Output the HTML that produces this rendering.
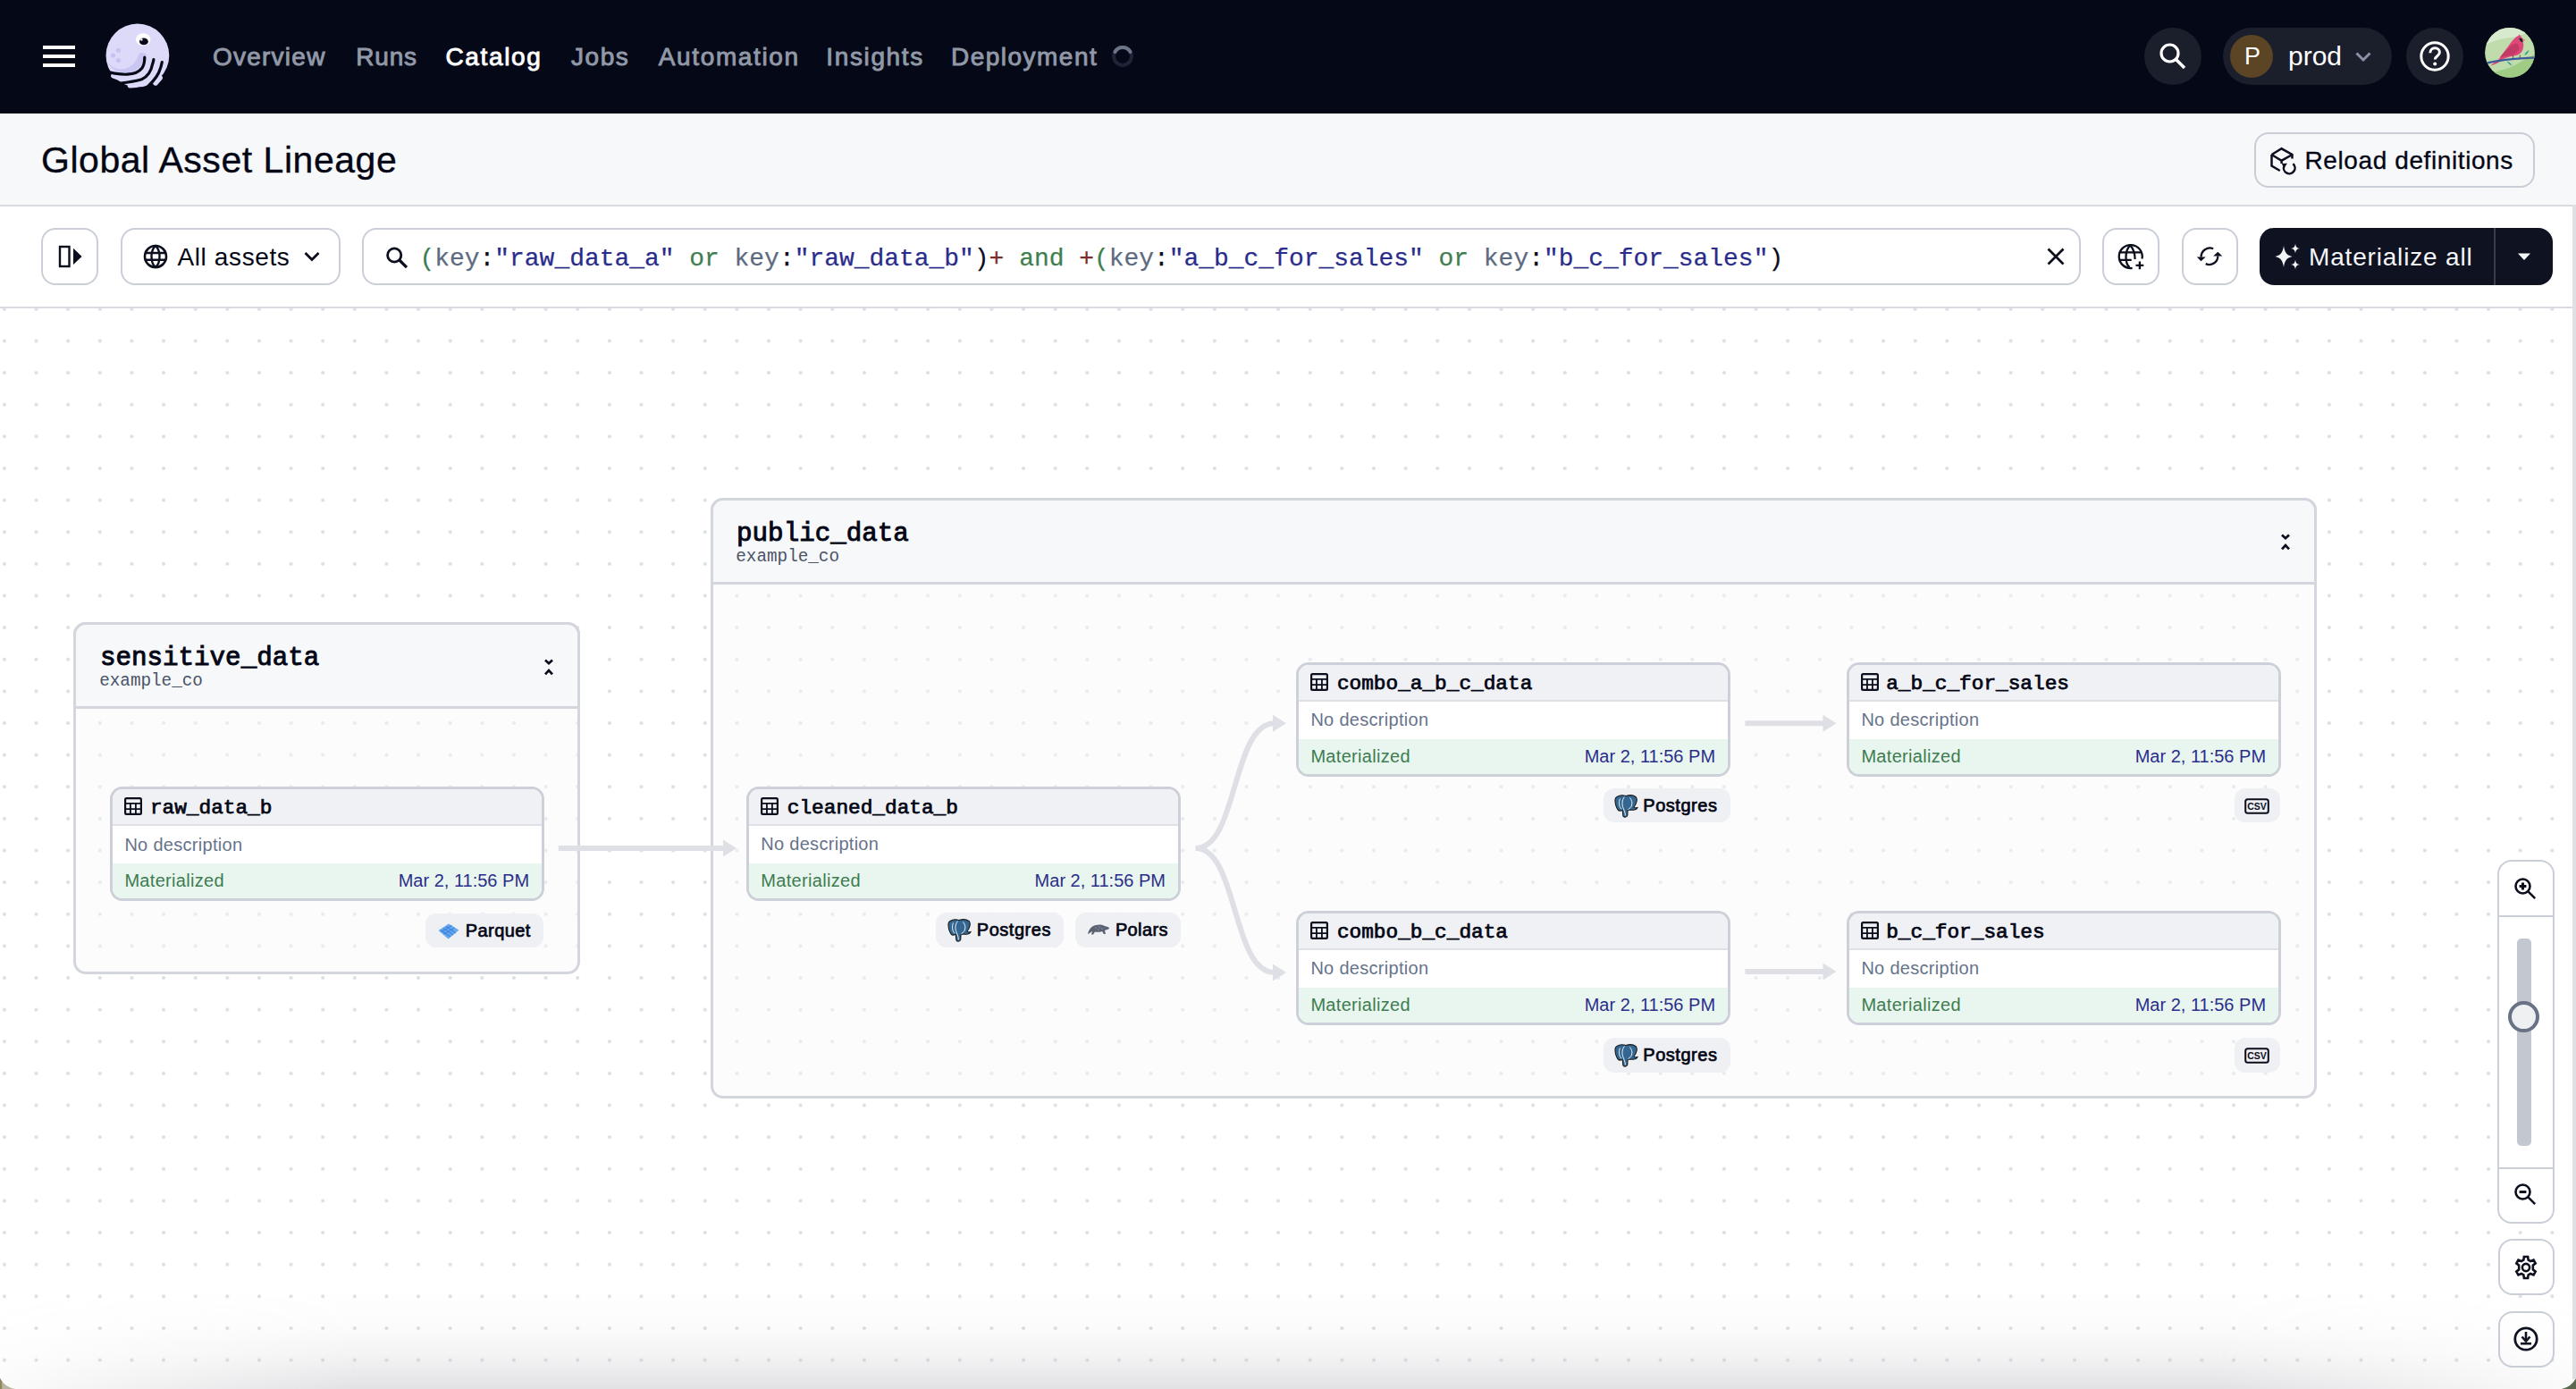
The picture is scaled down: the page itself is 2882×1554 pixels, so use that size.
<!DOCTYPE html>
<html><head><meta charset="utf-8"><title>Global Asset Lineage</title>
<style>
html,body{margin:0;padding:0;}
body{width:2882px;height:1554px;position:relative;overflow:hidden;background:#fff;font-family:'Liberation Sans', sans-serif;}
.a{position:absolute;}
.t{position:absolute;white-space:nowrap;line-height:40px;height:40px;}
</style></head><body>
<div class="a" style="left:0.00px;top:0.00px;width:2882.00px;height:127.00px;background:#050816"></div>
<div class="a" style="left:0.00px;top:127.00px;width:2882.00px;height:1.00px;background:#ffffff"></div>
<div class="a" style="left:48.00px;top:51.00px;width:36.00px;height:4.00px;background:#fff"></div>
<div class="a" style="left:48.00px;top:61.00px;width:36.00px;height:4.00px;background:#fff"></div>
<div class="a" style="left:48.00px;top:71.00px;width:36.00px;height:4.00px;background:#fff"></div>
<svg class="a" style="left:110px;top:20px" width="90" height="90" viewBox="110 20 90 90">
  <defs><clipPath id="hc"><circle cx="153.9" cy="62" r="35.4"/></clipPath></defs>
  <g clip-path="url(#hc)">
  <rect x="110" y="20" width="90" height="90" fill="#dcdaf8"/>
  <path d="M119.5 68 C125 80, 137 83, 146 81 C155 79, 161 71, 164 61.5 C162.5 58.5, 157 58, 155 61 C152.5 69, 147 75.5, 139 77 C131 78.5, 124 75, 119.5 68 Z" fill="#c9c6f4"/>
  </g>
  <path d="M127 84.8 L134 87.2" stroke="#dcdaf8" stroke-width="5.8" stroke-linecap="round"/>
  <path d="M145.5 95.6 L152 95.2" stroke="#dcdaf8" stroke-width="5.8" stroke-linecap="round"/>
  <path d="M174 92.8 L179 87" stroke="#dcdaf8" stroke-width="5.8" stroke-linecap="round"/>
  <path d="M108 77.5 C118 80, 130 83.8, 142.4 83.2 C150 82.8, 156 80, 159 76 C161 73, 161.8 68, 161.8 64.2" stroke="#050816" stroke-width="3.2" fill="none" stroke-linecap="round"/>
  <path d="M120 95 C130 93, 146 92.8, 158.6 88.8 C165 86, 169 80, 170.6 71.8 C171.4 69, 171.8 68, 171.9 66.7" stroke="#050816" stroke-width="3.2" fill="none" stroke-linecap="round"/>
  <path d="M160 102 C166 96.5, 174 89, 177.5 81.5 C179.5 77, 180.8 73, 181.3 69.6" stroke="#050816" stroke-width="3.2" fill="none" stroke-linecap="round"/>
  <circle cx="132.4" cy="56.3" r="2.6" fill="#c6c3f2"/>
  <circle cx="126.5" cy="62.1" r="2.6" fill="#c6c3f2"/>
  <circle cx="132.4" cy="67.6" r="2.6" fill="#c6c3f2"/>
  <ellipse cx="160.2" cy="44.2" rx="8.1" ry="7" fill="#ffffff"/>
  <ellipse cx="160.9" cy="46.4" rx="4.9" ry="3.9" fill="#050816"/>
  <circle cx="158.4" cy="44.4" r="1.2" fill="#ffffff"/>
</svg>
<div class="t" style="left:237.90px;top:43.89px;font-family:'Liberation Sans', sans-serif;font-size:28px;font-weight:normal;color:#9199a8;letter-spacing:1.26px;-webkit-text-stroke:0.9px #9199a8;">Overview</div>
<div class="t" style="left:398.30px;top:43.89px;font-family:'Liberation Sans', sans-serif;font-size:28px;font-weight:normal;color:#9199a8;letter-spacing:0.8px;-webkit-text-stroke:0.9px #9199a8;">Runs</div>
<div class="t" style="left:498.40px;top:43.89px;font-family:'Liberation Sans', sans-serif;font-size:28px;font-weight:normal;color:#ffffff;letter-spacing:1.65px;-webkit-text-stroke:0.9px #ffffff;">Catalog</div>
<div class="t" style="left:639.10px;top:43.89px;font-family:'Liberation Sans', sans-serif;font-size:28px;font-weight:normal;color:#9199a8;letter-spacing:1.53px;-webkit-text-stroke:0.9px #9199a8;">Jobs</div>
<div class="t" style="left:736.80px;top:43.89px;font-family:'Liberation Sans', sans-serif;font-size:28px;font-weight:normal;color:#9199a8;letter-spacing:1.63px;-webkit-text-stroke:0.9px #9199a8;">Automation</div>
<div class="t" style="left:924.30px;top:43.89px;font-family:'Liberation Sans', sans-serif;font-size:28px;font-weight:normal;color:#9199a8;letter-spacing:1.63px;-webkit-text-stroke:0.9px #9199a8;">Insights</div>
<div class="t" style="left:1064.10px;top:43.89px;font-family:'Liberation Sans', sans-serif;font-size:28px;font-weight:normal;color:#9199a8;letter-spacing:1.47px;-webkit-text-stroke:0.9px #9199a8;">Deployment</div>
<svg class="a" style="left:1240px;top:47px" width="32" height="32" viewBox="0 0 32 32">
  <circle cx="16" cy="16" r="9.9" stroke="#1f2335" stroke-width="4" fill="none"/>
  <path d="M7.43 11.05 A9.9 9.9 0 0 1 24.57 11.05" stroke="#6b7588" stroke-width="4" fill="none" stroke-linecap="round"/>
</svg>
<div class="a" style="left:2399.00px;top:31.00px;width:64.00px;height:64.00px;background:#1b1e2b;border-radius:50%"></div>
<svg class="a" style="left:2412px;top:44px" width="38" height="38" viewBox="0 0 38 38">
  <circle cx="15.5" cy="15.5" r="9.5" stroke="#fff" stroke-width="3.2" fill="none"/>
  <path d="M22.5 22.5 L32 32" stroke="#fff" stroke-width="3.6" stroke-linecap="butt"/>
</svg>
<div class="a" style="left:2487.00px;top:31.00px;width:189.00px;height:64.00px;background:#1b1e2b;border-radius:32px"></div>
<div class="a" style="left:2495.00px;top:39.00px;width:48.00px;height:48.00px;background:#5c4524;border-radius:50%"></div>
<div class="t" style="left:2511.00px;top:42.64px;font-family:'Liberation Sans', sans-serif;font-size:27px;font-weight:normal;color:#ffffff;">P</div>
<div class="t" style="left:2560.00px;top:42.70px;font-family:'Liberation Sans', sans-serif;font-size:30px;font-weight:normal;color:#ffffff;">prod</div>
<svg class="a" style="left:2632px;top:52px" width="24" height="22" viewBox="0 0 24 22">
  <path d="M4.5 7.5 L12 15 L19.5 7.5" stroke="#8a93a5" stroke-width="3" fill="none"/>
</svg>
<div class="a" style="left:2692.00px;top:31.00px;width:64.00px;height:64.00px;background:#1b1e2b;border-radius:50%"></div>
<svg class="a" style="left:2704px;top:43px" width="40" height="40" viewBox="0 0 40 40">
  <circle cx="20" cy="20" r="15.2" stroke="#fff" stroke-width="3" fill="none"/>
  <path d="M14.8 16.2 C14.8 12.8 17.2 10.8 20.2 10.8 C23.2 10.8 25.4 12.8 25.4 15.6 C25.4 19.6 20.2 19.8 20.2 23.6" stroke="#fff" stroke-width="3" fill="none"/>
  <circle cx="20.2" cy="28.4" r="2" fill="#fff"/>
</svg>
<svg class="a" style="left:2780px;top:31px" width="56" height="56" viewBox="0 0 56 56">
  <defs><clipPath id="av"><circle cx="28" cy="27.9" r="27.9"/></clipPath></defs>
  <g clip-path="url(#av)">
    <rect width="56" height="56" fill="#c0dcad"/>
    <path d="M0 0 H56 V4 C46 4, 40 10, 30 11 C20 12, 10 14, 0 20Z" fill="#d8eacd"/>
    <path d="M0 56 V52 C10 50, 16 48, 24 46 C34 43, 42 36, 56 30 V56Z" fill="#9fcb85"/>
    <path d="M6 42.6 L16 35 C18 31, 22 27, 28.3 17.7 C32 13, 35 10, 37.5 9 L38.4 7.4 C40 9, 41 10, 42 12.2 L45.1 13.8 L42.5 16 C43.5 18, 43.5 21, 42.8 23 C42 27, 39 30, 35 31 C30 32, 24 33, 19 36 C17 38.5, 12 41, 6 42.6Z" fill="#e0467a"/>
    <path d="M17 33 C22 27, 27 21, 33 18 C37 17, 39 20, 38 24 C37 28, 32 30.5, 25 31.5 C22 32, 19 33, 17 33Z" fill="#c23a66"/>
    <path d="M42 12.2 L45.5 13.8 L42.5 15.6Z" fill="#f29080"/>
    <path d="M38.4 12 C39.5 11.5, 41.5 12, 42.3 13 L42.3 16.4 C40.5 16, 39 14.5, 38.4 12Z" fill="#1b2a2a"/>
    <path d="M0 40 C12 37, 30 34.5, 56 33.4" stroke="#3b5a9c" stroke-width="2.4" fill="none"/>
    <path d="M31.5 30.5 V34 M39.3 30.5 V34" stroke="#6a4050" stroke-width="0.9"/>
    <path d="M44.4 31 C45 28, 47 26, 49.5 25.1 C49 28, 47 30, 44.4 31Z" fill="#3da393"/>
    <path d="M24.6 37.6 C27 38, 29.5 40, 30.6 42.6 C28 42, 26 40, 24.6 37.6Z" fill="#3da393"/>
  </g>
</svg>
<div class="a" style="left:0.00px;top:128.00px;width:2882.00px;height:101.00px;background:#f7f8fa"></div>
<div class="a" style="left:0.00px;top:229.00px;width:2882.00px;height:2.00px;background:#d8dbe1"></div>
<div class="t" style="left:46.00px;top:158.69px;font-family:'Liberation Sans', sans-serif;font-size:41px;font-weight:normal;color:#030615;letter-spacing:0.54px;-webkit-text-stroke:0.35px #030615;">Global Asset Lineage</div>
<div class="a" style="left:2521.50px;top:147.50px;width:314.50px;height:62.50px;border:2px solid #c8cdd6;border-radius:16px;box-sizing:border-box;background:#f7f8fa"></div>
<svg class="a" style="left:2536px;top:162px" width="36" height="36" viewBox="0 0 36 36">
  <path d="M5.5 11 L16.6 4.3 L28.5 11 L28.5 15.5 M5.5 11 L16.6 17.7 L28.5 11 M16.6 17.7 V21 M5.5 11 V23.6 L14.8 29" stroke="#0b0e1c" stroke-width="2.5" fill="none" stroke-linejoin="miter"/>
  <path d="M19.5 23.4 A6.3 6.3 0 1 0 29.4 21.2" stroke="#0b0e1c" stroke-width="2.5" fill="none"/>
  <path d="M16.8 21 L23 20.8 L19.2 26.2Z" fill="#0b0e1c"/>
</svg>
<div class="t" style="left:2578.50px;top:159.59px;font-family:'Liberation Sans', sans-serif;font-size:28px;font-weight:normal;color:#030615;letter-spacing:0.6px;-webkit-text-stroke:0.3px #030615;">Reload definitions</div>
<div class="a" style="left:0.00px;top:231.00px;width:2878.00px;height:112.00px;background:#ffffff"></div>
<div class="a" style="left:0.00px;top:343.00px;width:2878.00px;height:2.00px;background:#d8dbe1"></div>
<div class="a" style="left:46.00px;top:255.00px;width:64.00px;height:63.50px;border:2px solid #c9ced7;border-radius:16px;box-sizing:border-box;background:#fff"></div>
<svg class="a" style="left:60px;top:271px" width="36" height="32" viewBox="0 0 36 32">
  <rect x="7" y="5" width="10.5" height="22" stroke="#0b0e1c" stroke-width="2.4" fill="none"/>
  <path d="M22 6.8 L31.6 16 L22 25Z" fill="#0b0e1c"/>
</svg>
<div class="a" style="left:134.50px;top:255.00px;width:246.00px;height:63.50px;border:2px solid #c9ced7;border-radius:16px;box-sizing:border-box;background:#fff"></div>
<svg class="a" style="left:158px;top:271px" width="32" height="32" viewBox="0 0 32 32">
  <circle cx="16" cy="16" r="12" stroke="#0b0e1c" stroke-width="2.6" fill="none"/>
  <path d="M16 4 C10 9, 10 23, 16 28 C22 23, 22 9, 16 4Z" stroke="#0b0e1c" stroke-width="2.4" fill="none"/>
  <path d="M4.5 12 H27.5 M4.5 19.8 H27.5" stroke="#0b0e1c" stroke-width="2.4"/>
</svg>
<div class="t" style="left:198.50px;top:268.19px;font-family:'Liberation Sans', sans-serif;font-size:28px;font-weight:normal;color:#030615;letter-spacing:0.61px;">All assets</div>
<svg class="a" style="left:336px;top:276px" width="26" height="22" viewBox="0 0 26 22">
  <path d="M5.5 7 L13 14.5 L20.5 7" stroke="#0b0e1c" stroke-width="2.8" fill="none"/>
</svg>
<div class="a" style="left:405.00px;top:255.00px;width:1923.00px;height:63.50px;border:2px solid #c9ced7;border-radius:16px;box-sizing:border-box;background:#fff"></div>
<svg class="a" style="left:428px;top:272px" width="34" height="34" viewBox="0 0 34 34">
  <circle cx="13.2" cy="13.5" r="7.6" stroke="#0b0e1c" stroke-width="2.8" fill="none"/>
  <path d="M18.8 19 L27 27.2" stroke="#0b0e1c" stroke-width="3.2"/>
</svg>
<div class="t" style="left:469.50px;top:269.57px;font-family:'Liberation Mono', monospace;font-size:27.94px;font-weight:normal;color:#0b0e1c;-webkit-text-stroke:0.25px currentColor;"><span style="color:#3f7e51">(</span><span style="color:#5d6a80">key</span><span style="color:#0b0e1c">:</span><span style="color:#2a2c8c">"raw_data_a"</span> <span style="color:#3f7e51">or</span> <span style="color:#5d6a80">key</span><span style="color:#0b0e1c">:</span><span style="color:#2a2c8c">"raw_data_b"</span><span style="color:#0b0e1c">)</span><span style="color:#7b2d2d">+</span> <span style="color:#3f7e51">and</span> <span style="color:#7b2d2d">+</span><span style="color:#3f7e51">(</span><span style="color:#5d6a80">key</span><span style="color:#0b0e1c">:</span><span style="color:#2a2c8c">"a_b_c_for_sales"</span> <span style="color:#3f7e51">or</span> <span style="color:#5d6a80">key</span><span style="color:#0b0e1c">:</span><span style="color:#2a2c8c">"b_c_for_sales"</span><span style="color:#0b0e1c">)</span></div>
<svg class="a" style="left:2283px;top:270px" width="34" height="34" viewBox="0 0 34 34">
  <path d="M8.5 8.5 L25.5 25.5 M25.5 8.5 L8.5 25.5" stroke="#0b0e1c" stroke-width="2.7"/>
</svg>
<div class="a" style="left:2352.00px;top:255.00px;width:63.50px;height:63.50px;border:2px solid #c9ced7;border-radius:16px;box-sizing:border-box;background:#fff"></div>
<svg class="a" style="left:2366px;top:270px" width="38" height="36" viewBox="0 0 38 36">
  <path d="M30.5 19.5 A13 13 0 1 0 19.6 29.9" stroke="#0b0e1c" stroke-width="2.3" fill="none"/>
  <path d="M17.4 4.4 C11 10, 11 24, 16.5 29.2 M17.4 4.4 C21.5 9, 22.6 13, 22.6 20" stroke="#0b0e1c" stroke-width="2.3" fill="none"/>
  <path d="M5 12.3 H30 M5 20.9 H18.7" stroke="#0b0e1c" stroke-width="2.3"/>
  <path d="M27.9 22.5 V31.3 M23.5 26.9 H32.3" stroke="#0b0e1c" stroke-width="2.3"/>
</svg>
<div class="a" style="left:2440.50px;top:255.00px;width:63.50px;height:63.50px;border:2px solid #c9ced7;border-radius:16px;box-sizing:border-box;background:#fff"></div>
<svg class="a" style="left:2454px;top:270px" width="36" height="34" viewBox="0 0 36 34">
  <path d="M22.2 8.3 A9.8 9.8 0 0 0 8.6 17.6" stroke="#0b0e1c" stroke-width="2.3" fill="none"/>
  <path d="M13.7 25.1 A9.6 9.6 0 0 0 27.3 16.4" stroke="#0b0e1c" stroke-width="2.3" fill="none"/>
  <path d="M3.8 17.4 L13.7 17.4 L8.5 22.2Z" fill="#0b0e1c"/>
  <path d="M22.2 16.6 L32.3 16.6 L27.3 11.7Z" fill="#0b0e1c"/>
</svg>
<div class="a" style="left:2528.00px;top:255.00px;width:328.00px;height:63.50px;background:#0f1221;border-radius:16px"></div>
<div class="a" style="left:2790.00px;top:255.00px;width:2.00px;height:63.50px;background:#3a3e4c"></div>
<svg class="a" style="left:2543px;top:270px" width="36" height="34" viewBox="0 0 36 34">
  <path d="M12 5 C13 12 15 15.5 21.5 17 C15 18.5 13 22 12 29 C11 22 9 18.5 2.5 17 C9 15.5 11 12 12 5Z" fill="#f5f6f8"/>
  <path d="M25 2.5 C25.5 6 26.5 7.5 30 8 C26.5 8.5 25.5 10 25 13.5 C24.5 10 23.5 8.5 20 8 C23.5 7.5 24.5 6 25 2.5Z" fill="#f5f6f8"/>
  <path d="M25 20.5 C25.5 24 26.5 25.5 30 26 C26.5 26.5 25.5 28 25 31.5 C24.5 28 23.5 26.5 20 26 C23.5 25.5 24.5 24 25 20.5Z" fill="#f5f6f8"/>
</svg>
<div class="t" style="left:2583.00px;top:268.09px;font-family:'Liberation Sans', sans-serif;font-size:28px;font-weight:normal;color:#f5f6f8;letter-spacing:0.82px;">Materialize all</div>
<svg class="a" style="left:2814px;top:280px" width="20" height="14" viewBox="0 0 20 14">
  <path d="M3 3.5 L17 3.5 L10 11Z" fill="#f5f6f8"/>
</svg>
<svg class="a" style="left:0;top:345px" width="2882" height="1209" viewBox="0 345 2882 1209">
  <defs><pattern id="dots" x="4.9" y="345.8" width="35.63" height="35.63" patternUnits="userSpaceOnUse">
    <circle cx="0" cy="0" r="2.1" fill="#dcdee3"/><circle cx="35.63" cy="0" r="2.1" fill="#dcdee3"/>
    <circle cx="0" cy="35.63" r="2.1" fill="#dcdee3"/><circle cx="35.63" cy="35.63" r="2.1" fill="#dcdee3"/>
  </pattern></defs>
  <rect x="0" y="345" width="2882" height="1209" fill="#ffffff"/>
  <rect x="0" y="345" width="2882" height="1209" fill="url(#dots)"/>
</svg>
<div class="a" style="left:82.00px;top:696.20px;width:567.00px;height:393.80px;border:3px solid #d3d6dd;border-radius:14px;box-sizing:border-box;background:rgba(248,249,250,0.45)"></div>
<div class="a" style="left:82.00px;top:696.20px;width:567.00px;height:97.00px;border:3px solid #d3d6dd;border-bottom-width:3px;border-radius:14px 14px 0 0;box-sizing:border-box;background:#f7f8fa"></div>
<div class="t" style="left:112.00px;top:717.03px;font-family:'Liberation Mono', monospace;font-size:29.2px;font-weight:normal;color:#030615;-webkit-text-stroke:0.95px #030615;">sensitive_data</div>
<div class="t" style="left:111.20px;top:741.86px;font-family:'Liberation Mono', monospace;font-size:19.3px;font-weight:normal;color:#4b5468;">example_co</div>
<svg class="a" style="left:601.80px;top:735.20px" width="24" height="24" viewBox="0 0 24 24">
  <path d="M8 3.4 L12 7.2 L16 3.4 M8 19.3 L12 15 L16 19.3" stroke="#0b0e1c" stroke-width="2.7" fill="none"/>
</svg>
<div class="a" style="left:795.00px;top:557.00px;width:1797.00px;height:672.00px;border:3px solid #d3d6dd;border-radius:14px;box-sizing:border-box;background:rgba(248,249,250,0.45)"></div>
<div class="a" style="left:795.00px;top:557.00px;width:1797.00px;height:97.20px;border:3px solid #d3d6dd;border-bottom-width:3px;border-radius:14px 14px 0 0;box-sizing:border-box;background:#f7f8fa"></div>
<div class="t" style="left:824.10px;top:578.23px;font-family:'Liberation Mono', monospace;font-size:29.2px;font-weight:normal;color:#030615;-webkit-text-stroke:0.95px #030615;">public_data</div>
<div class="t" style="left:823.30px;top:602.56px;font-family:'Liberation Mono', monospace;font-size:19.3px;font-weight:normal;color:#4b5468;">example_co</div>
<svg class="a" style="left:2544.80px;top:595.00px" width="24" height="24" viewBox="0 0 24 24">
  <path d="M8 3.4 L12 7.2 L16 3.4 M8 19.3 L12 15 L16 19.3" stroke="#0b0e1c" stroke-width="2.7" fill="none"/>
</svg>
<svg class="a" style="left:0;top:0" width="2882" height="1554" viewBox="0 0 2882 1554">
  <g fill="none" stroke="#dfe0e5" stroke-width="6">
    <path d="M624.8 949 L810 949"/>
    <path d="M1337.6 949 C1385 949 1378 809.3 1426 809.3"/>
    <path d="M1337.6 949 C1385 949 1378 1088 1426 1088"/>
    <path d="M1952.4 809.2 L2041 809.2"/>
    <path d="M1952.4 1087.1 L2041 1087.1"/>
  </g>
  <g fill="#dfe0e5">
    <path d="M809 939.5 L824 949 L809 958.5Z"/>
    <path d="M1424 799.8 L1439 809.3 L1424 818.8Z"/>
    <path d="M1424 1078.5 L1439 1088 L1424 1097.5Z"/>
    <path d="M2039.5 799.7 L2054.5 809.2 L2039.5 818.7Z"/>
    <path d="M2039.5 1077.6 L2054.5 1087.1 L2039.5 1096.6Z"/>
  </g>
</svg>
<div class="a" style="left:123.20px;top:880.40px;width:485.60px;height:127.60px;border:3px solid #cdd0d8;border-radius:14px;box-sizing:border-box;background:#fff;overflow:hidden"></div>
<div class="a" style="left:126.20px;top:883.40px;width:479.60px;height:38.70px;background:#f0f1f4;border-radius:11px 11px 0 0"></div>
<div class="a" style="left:126.20px;top:922.10px;width:479.60px;height:2.00px;background:#dfe1e6"></div>
<div class="a" style="left:126.20px;top:965.90px;width:479.60px;height:39.10px;background:#e9f6ef;border-radius:0 0 11px 11px"></div>
<svg class="a" style="left:139.1px;top:892.1999999999999px" width="21" height="21" viewBox="0 0 21 21">
  <rect x="1.1" y="1.1" width="17.8" height="17.8" rx="1.4" fill="none" stroke="#0b0e1c" stroke-width="2.2"/>
  <path d="M1 6.95 H19 M1 13.15 H19 M6.95 6.5 V19 M12.9 6.5 V19" stroke="#0b0e1c" stroke-width="1.8"/>
</svg>
<div class="t" style="left:167.90px;top:884.25px;font-family:'Liberation Mono', monospace;font-size:22.75px;font-weight:normal;color:#030615;-webkit-text-stroke:0.75px #030615;">raw_data_b</div>
<div class="t" style="left:139.40px;top:924.57px;font-family:'Liberation Sans', sans-serif;font-size:20px;font-weight:normal;color:#66738a;letter-spacing:0.29px;">No description</div>
<div class="t" style="left:139.40px;top:965.37px;font-family:'Liberation Sans', sans-serif;font-size:20px;font-weight:normal;color:#3d7c50;letter-spacing:0.31px;">Materialized</div>
<div class="t" style="left:445.70px;top:965.37px;font-family:'Liberation Sans', sans-serif;font-size:20px;font-weight:normal;color:#2b2e8a;">Mar 2, 11:56 PM</div>
<div class="a" style="left:835.10px;top:880.00px;width:485.60px;height:127.60px;border:3px solid #cdd0d8;border-radius:14px;box-sizing:border-box;background:#fff;overflow:hidden"></div>
<div class="a" style="left:838.10px;top:883.00px;width:479.60px;height:38.70px;background:#f0f1f4;border-radius:11px 11px 0 0"></div>
<div class="a" style="left:838.10px;top:921.70px;width:479.60px;height:2.00px;background:#dfe1e6"></div>
<div class="a" style="left:838.10px;top:965.50px;width:479.60px;height:39.10px;background:#e9f6ef;border-radius:0 0 11px 11px"></div>
<svg class="a" style="left:851.0px;top:891.8px" width="21" height="21" viewBox="0 0 21 21">
  <rect x="1.1" y="1.1" width="17.8" height="17.8" rx="1.4" fill="none" stroke="#0b0e1c" stroke-width="2.2"/>
  <path d="M1 6.95 H19 M1 13.15 H19 M6.95 6.5 V19 M12.9 6.5 V19" stroke="#0b0e1c" stroke-width="1.8"/>
</svg>
<div class="t" style="left:880.80px;top:883.85px;font-family:'Liberation Mono', monospace;font-size:22.75px;font-weight:normal;color:#030615;-webkit-text-stroke:0.75px #030615;">cleaned_data_b</div>
<div class="t" style="left:851.30px;top:924.17px;font-family:'Liberation Sans', sans-serif;font-size:20px;font-weight:normal;color:#66738a;letter-spacing:0.29px;">No description</div>
<div class="t" style="left:851.30px;top:964.97px;font-family:'Liberation Sans', sans-serif;font-size:20px;font-weight:normal;color:#3d7c50;letter-spacing:0.31px;">Materialized</div>
<div class="t" style="left:1157.60px;top:964.97px;font-family:'Liberation Sans', sans-serif;font-size:20px;font-weight:normal;color:#2b2e8a;">Mar 2, 11:56 PM</div>
<div class="a" style="left:1450.20px;top:741.30px;width:485.60px;height:127.60px;border:3px solid #cdd0d8;border-radius:14px;box-sizing:border-box;background:#fff;overflow:hidden"></div>
<div class="a" style="left:1453.20px;top:744.30px;width:479.60px;height:38.70px;background:#f0f1f4;border-radius:11px 11px 0 0"></div>
<div class="a" style="left:1453.20px;top:783.00px;width:479.60px;height:2.00px;background:#dfe1e6"></div>
<div class="a" style="left:1453.20px;top:826.80px;width:479.60px;height:39.10px;background:#e9f6ef;border-radius:0 0 11px 11px"></div>
<svg class="a" style="left:1466.1000000000001px;top:753.0999999999999px" width="21" height="21" viewBox="0 0 21 21">
  <rect x="1.1" y="1.1" width="17.8" height="17.8" rx="1.4" fill="none" stroke="#0b0e1c" stroke-width="2.2"/>
  <path d="M1 6.95 H19 M1 13.15 H19 M6.95 6.5 V19 M12.9 6.5 V19" stroke="#0b0e1c" stroke-width="1.8"/>
</svg>
<div class="t" style="left:1495.90px;top:745.15px;font-family:'Liberation Mono', monospace;font-size:22.75px;font-weight:normal;color:#030615;-webkit-text-stroke:0.75px #030615;">combo_a_b_c_data</div>
<div class="t" style="left:1466.40px;top:785.47px;font-family:'Liberation Sans', sans-serif;font-size:20px;font-weight:normal;color:#66738a;letter-spacing:0.29px;">No description</div>
<div class="t" style="left:1466.40px;top:826.27px;font-family:'Liberation Sans', sans-serif;font-size:20px;font-weight:normal;color:#3d7c50;letter-spacing:0.31px;">Materialized</div>
<div class="t" style="left:1772.70px;top:826.27px;font-family:'Liberation Sans', sans-serif;font-size:20px;font-weight:normal;color:#2b2e8a;">Mar 2, 11:56 PM</div>
<div class="a" style="left:2066.20px;top:741.30px;width:485.60px;height:127.60px;border:3px solid #cdd0d8;border-radius:14px;box-sizing:border-box;background:#fff;overflow:hidden"></div>
<div class="a" style="left:2069.20px;top:744.30px;width:479.60px;height:38.70px;background:#f0f1f4;border-radius:11px 11px 0 0"></div>
<div class="a" style="left:2069.20px;top:783.00px;width:479.60px;height:2.00px;background:#dfe1e6"></div>
<div class="a" style="left:2069.20px;top:826.80px;width:479.60px;height:39.10px;background:#e9f6ef;border-radius:0 0 11px 11px"></div>
<svg class="a" style="left:2082.1px;top:753.0999999999999px" width="21" height="21" viewBox="0 0 21 21">
  <rect x="1.1" y="1.1" width="17.8" height="17.8" rx="1.4" fill="none" stroke="#0b0e1c" stroke-width="2.2"/>
  <path d="M1 6.95 H19 M1 13.15 H19 M6.95 6.5 V19 M12.9 6.5 V19" stroke="#0b0e1c" stroke-width="1.8"/>
</svg>
<div class="t" style="left:2110.20px;top:745.15px;font-family:'Liberation Mono', monospace;font-size:22.75px;font-weight:normal;color:#030615;-webkit-text-stroke:0.75px #030615;">a_b_c_for_sales</div>
<div class="t" style="left:2082.40px;top:785.47px;font-family:'Liberation Sans', sans-serif;font-size:20px;font-weight:normal;color:#66738a;letter-spacing:0.29px;">No description</div>
<div class="t" style="left:2082.40px;top:826.27px;font-family:'Liberation Sans', sans-serif;font-size:20px;font-weight:normal;color:#3d7c50;letter-spacing:0.31px;">Materialized</div>
<div class="t" style="left:2388.70px;top:826.27px;font-family:'Liberation Sans', sans-serif;font-size:20px;font-weight:normal;color:#2b2e8a;">Mar 2, 11:56 PM</div>
<div class="a" style="left:1450.20px;top:1019.20px;width:485.60px;height:127.60px;border:3px solid #cdd0d8;border-radius:14px;box-sizing:border-box;background:#fff;overflow:hidden"></div>
<div class="a" style="left:1453.20px;top:1022.20px;width:479.60px;height:38.70px;background:#f0f1f4;border-radius:11px 11px 0 0"></div>
<div class="a" style="left:1453.20px;top:1060.90px;width:479.60px;height:2.00px;background:#dfe1e6"></div>
<div class="a" style="left:1453.20px;top:1104.70px;width:479.60px;height:39.10px;background:#e9f6ef;border-radius:0 0 11px 11px"></div>
<svg class="a" style="left:1466.1000000000001px;top:1031.0px" width="21" height="21" viewBox="0 0 21 21">
  <rect x="1.1" y="1.1" width="17.8" height="17.8" rx="1.4" fill="none" stroke="#0b0e1c" stroke-width="2.2"/>
  <path d="M1 6.95 H19 M1 13.15 H19 M6.95 6.5 V19 M12.9 6.5 V19" stroke="#0b0e1c" stroke-width="1.8"/>
</svg>
<div class="t" style="left:1495.90px;top:1023.05px;font-family:'Liberation Mono', monospace;font-size:22.75px;font-weight:normal;color:#030615;-webkit-text-stroke:0.75px #030615;">combo_b_c_data</div>
<div class="t" style="left:1466.40px;top:1063.37px;font-family:'Liberation Sans', sans-serif;font-size:20px;font-weight:normal;color:#66738a;letter-spacing:0.29px;">No description</div>
<div class="t" style="left:1466.40px;top:1104.17px;font-family:'Liberation Sans', sans-serif;font-size:20px;font-weight:normal;color:#3d7c50;letter-spacing:0.31px;">Materialized</div>
<div class="t" style="left:1772.70px;top:1104.17px;font-family:'Liberation Sans', sans-serif;font-size:20px;font-weight:normal;color:#2b2e8a;">Mar 2, 11:56 PM</div>
<div class="a" style="left:2066.20px;top:1019.20px;width:485.60px;height:127.60px;border:3px solid #cdd0d8;border-radius:14px;box-sizing:border-box;background:#fff;overflow:hidden"></div>
<div class="a" style="left:2069.20px;top:1022.20px;width:479.60px;height:38.70px;background:#f0f1f4;border-radius:11px 11px 0 0"></div>
<div class="a" style="left:2069.20px;top:1060.90px;width:479.60px;height:2.00px;background:#dfe1e6"></div>
<div class="a" style="left:2069.20px;top:1104.70px;width:479.60px;height:39.10px;background:#e9f6ef;border-radius:0 0 11px 11px"></div>
<svg class="a" style="left:2082.1px;top:1031.0px" width="21" height="21" viewBox="0 0 21 21">
  <rect x="1.1" y="1.1" width="17.8" height="17.8" rx="1.4" fill="none" stroke="#0b0e1c" stroke-width="2.2"/>
  <path d="M1 6.95 H19 M1 13.15 H19 M6.95 6.5 V19 M12.9 6.5 V19" stroke="#0b0e1c" stroke-width="1.8"/>
</svg>
<div class="t" style="left:2110.20px;top:1023.05px;font-family:'Liberation Mono', monospace;font-size:22.75px;font-weight:normal;color:#030615;-webkit-text-stroke:0.75px #030615;">b_c_for_sales</div>
<div class="t" style="left:2082.40px;top:1063.37px;font-family:'Liberation Sans', sans-serif;font-size:20px;font-weight:normal;color:#66738a;letter-spacing:0.29px;">No description</div>
<div class="t" style="left:2082.40px;top:1104.17px;font-family:'Liberation Sans', sans-serif;font-size:20px;font-weight:normal;color:#3d7c50;letter-spacing:0.31px;">Materialized</div>
<div class="t" style="left:2388.70px;top:1104.17px;font-family:'Liberation Sans', sans-serif;font-size:20px;font-weight:normal;color:#2b2e8a;">Mar 2, 11:56 PM</div>
<div class="a" style="left:476.40px;top:1021.60px;width:131.20px;height:38.80px;background:#eff0f3;border-radius:12px"></div>
<svg class="a" style="left:490px;top:1031.5px" width="24" height="20" viewBox="0 0 24 20">
  <path d="M0.5 9 L12 1.5 L23.5 8.5 L11.5 18.5Z" fill="#6aa8ee"/>
  <path d="M3 8.5 L14 16 M6 6.5 L17 14 M9 4.5 L20 12 M3.5 10.5 L15.5 3.5 M6.5 13 L18.5 6" stroke="#3d86e0" stroke-width="1.2"/>
</svg>
<div class="t" style="left:520.80px;top:1020.57px;font-family:'Liberation Sans', sans-serif;font-size:20px;font-weight:normal;color:#030615;letter-spacing:0.42px;-webkit-text-stroke:0.7px #030615;">Parquet</div>
<div class="a" style="left:1047.00px;top:1021.40px;width:142.80px;height:38.80px;background:#eff0f3;border-radius:12px"></div>
<svg class="a" style="left:1059.5px;top:1027.8px" width="28" height="28" viewBox="0 0 28 28">
  <path d="M3 2.5 C6 0.5, 10 0.5, 13 1.5 C16 0.5, 21 0.2, 24 2.5 C26.5 5, 25 10, 22 14 C22.5 15, 24 15, 26 14.5 C25 17, 22 17.5, 18.5 17 C17 17, 15.5 17.2, 15 18 L14.8 23 C14.5 25.5, 10 26, 9.8 23.5 L9.2 17.5 C8 17.8, 6 18.8, 4.5 17.5 C2 15, 0.8 9, 1 5.5 C1.2 4, 2 3, 3 2.5Z" fill="#336791" stroke="#1b1b1b" stroke-width="1.1"/>
  <path d="M6.5 4.5 C5 8, 5 13, 8 16.2 M11.5 2.5 C8.5 6, 8.5 11, 10 15 C11 18, 12.5 20, 12.3 23.5 M17.5 3.5 C19.5 6, 20.5 9, 19.5 12 C19 14, 17.5 15.5, 15.5 16.5" stroke="#ffffff" stroke-width="0.9" fill="none"/>
</svg>
<div class="t" style="left:1092.80px;top:1020.37px;font-family:'Liberation Sans', sans-serif;font-size:20px;font-weight:normal;color:#030615;letter-spacing:0.53px;-webkit-text-stroke:0.7px #030615;">Postgres</div>
<div class="a" style="left:1203.20px;top:1021.40px;width:117.60px;height:38.80px;background:#eff0f3;border-radius:12px"></div>
<svg class="a" style="left:1216px;top:1033px" width="26" height="14" viewBox="0 0 26 14">
  <path d="M1 12 C2 7 5 3 10 2 C14 1 18 1.5 20 3 C22 3.5 25 4 25 6 C23 7 21 7.5 20 8 L21 12 L19 12 L17 9 C14 10 11 10 9 9.5 L7 12.5 L5 12.5 L6 9 C4 10 2.5 11.5 1 12Z" fill="#5b6273"/>
  <circle cx="10" cy="5" r="0.6" fill="#c8ccd6"/><circle cx="14" cy="4" r="0.6" fill="#c8ccd6"/><circle cx="13" cy="7" r="0.6" fill="#c8ccd6"/><circle cx="17" cy="6" r="0.6" fill="#c8ccd6"/>
</svg>
<div class="t" style="left:1247.90px;top:1020.37px;font-family:'Liberation Sans', sans-serif;font-size:20px;font-weight:normal;color:#030615;letter-spacing:0.38px;-webkit-text-stroke:0.7px #030615;">Polars</div>
<div class="a" style="left:1793.80px;top:881.70px;width:142.00px;height:38.80px;background:#eff0f3;border-radius:12px"></div>
<svg class="a" style="left:1805.6px;top:888.6px" width="28" height="28" viewBox="0 0 28 28">
  <path d="M3 2.5 C6 0.5, 10 0.5, 13 1.5 C16 0.5, 21 0.2, 24 2.5 C26.5 5, 25 10, 22 14 C22.5 15, 24 15, 26 14.5 C25 17, 22 17.5, 18.5 17 C17 17, 15.5 17.2, 15 18 L14.8 23 C14.5 25.5, 10 26, 9.8 23.5 L9.2 17.5 C8 17.8, 6 18.8, 4.5 17.5 C2 15, 0.8 9, 1 5.5 C1.2 4, 2 3, 3 2.5Z" fill="#336791" stroke="#1b1b1b" stroke-width="1.1"/>
  <path d="M6.5 4.5 C5 8, 5 13, 8 16.2 M11.5 2.5 C8.5 6, 8.5 11, 10 15 C11 18, 12.5 20, 12.3 23.5 M17.5 3.5 C19.5 6, 20.5 9, 19.5 12 C19 14, 17.5 15.5, 15.5 16.5" stroke="#ffffff" stroke-width="0.9" fill="none"/>
</svg>
<div class="t" style="left:1838.30px;top:880.67px;font-family:'Liberation Sans', sans-serif;font-size:20px;font-weight:normal;color:#030615;letter-spacing:0.53px;-webkit-text-stroke:0.7px #030615;">Postgres</div>
<div class="a" style="left:1793.80px;top:1160.90px;width:142.00px;height:38.80px;background:#eff0f3;border-radius:12px"></div>
<svg class="a" style="left:1805.6px;top:1167.8px" width="28" height="28" viewBox="0 0 28 28">
  <path d="M3 2.5 C6 0.5, 10 0.5, 13 1.5 C16 0.5, 21 0.2, 24 2.5 C26.5 5, 25 10, 22 14 C22.5 15, 24 15, 26 14.5 C25 17, 22 17.5, 18.5 17 C17 17, 15.5 17.2, 15 18 L14.8 23 C14.5 25.5, 10 26, 9.8 23.5 L9.2 17.5 C8 17.8, 6 18.8, 4.5 17.5 C2 15, 0.8 9, 1 5.5 C1.2 4, 2 3, 3 2.5Z" fill="#336791" stroke="#1b1b1b" stroke-width="1.1"/>
  <path d="M6.5 4.5 C5 8, 5 13, 8 16.2 M11.5 2.5 C8.5 6, 8.5 11, 10 15 C11 18, 12.5 20, 12.3 23.5 M17.5 3.5 C19.5 6, 20.5 9, 19.5 12 C19 14, 17.5 15.5, 15.5 16.5" stroke="#ffffff" stroke-width="0.9" fill="none"/>
</svg>
<div class="t" style="left:1838.30px;top:1159.87px;font-family:'Liberation Sans', sans-serif;font-size:20px;font-weight:normal;color:#030615;letter-spacing:0.53px;-webkit-text-stroke:0.7px #030615;">Postgres</div>
<div class="a" style="left:2499.60px;top:881.70px;width:51.00px;height:38.80px;background:#eff0f3;border-radius:12px"></div>
<svg class="a" style="left:2510.8px;top:892.5px" width="28" height="18" viewBox="0 0 28 18">
  <rect x="1.2" y="1.2" width="25.6" height="15.6" rx="2.5" fill="none" stroke="#0b0e1c" stroke-width="2"/>
  <text x="14" y="13.2" text-anchor="middle" font-family="Liberation Sans" font-weight="bold" font-size="10.5" fill="#0b0e1c">CSV</text>
</svg>
<div class="a" style="left:2499.60px;top:1160.90px;width:51.00px;height:38.80px;background:#eff0f3;border-radius:12px"></div>
<svg class="a" style="left:2510.8px;top:1171.7px" width="28" height="18" viewBox="0 0 28 18">
  <rect x="1.2" y="1.2" width="25.6" height="15.6" rx="2.5" fill="none" stroke="#0b0e1c" stroke-width="2"/>
  <text x="14" y="13.2" text-anchor="middle" font-family="Liberation Sans" font-weight="bold" font-size="10.5" fill="#0b0e1c">CSV</text>
</svg>
<div class="a" style="left:2794.00px;top:962.40px;width:63.50px;height:406.20px;border:2px solid #c9ced7;box-sizing:border-box;background:#fff;border-radius:16px"></div>
<div class="a" style="left:2796.00px;top:1024.00px;width:59.50px;height:2.00px;background:#c9ced7"></div>
<div class="a" style="left:2796.00px;top:1306.00px;width:59.50px;height:2.00px;background:#c9ced7"></div>
<div class="a" style="left:2815.70px;top:1049.70px;width:16.40px;height:232.20px;background:#c3c7cf;border-radius:5px"></div>
<svg class="a" style="left:2802px;top:1117px" width="44" height="44" viewBox="0 0 44 44">
  <circle cx="21.5" cy="20.6" r="15.5" fill="#eff0f2" stroke="#6a7286" stroke-width="4"/>
</svg>
<svg class="a" style="left:2811px;top:980px" width="30" height="30" viewBox="0 0 30 30">
  <circle cx="11.5" cy="11.5" r="8" fill="none" stroke="#0b0e1c" stroke-width="2.6"/>
  <path d="M17.2 17.2 L25.2 25.2" stroke="#0b0e1c" stroke-width="2.5"/>
  <path d="M7.6 11.5 H15.4 M11.5 7.6 V15.4" stroke="#0b0e1c" stroke-width="3"/>
</svg>
<svg class="a" style="left:2811px;top:1322px" width="30" height="30" viewBox="0 0 30 30">
  <circle cx="11.5" cy="11.5" r="8" fill="none" stroke="#0b0e1c" stroke-width="2.6"/>
  <path d="M17.2 17.2 L25.2 25.2" stroke="#0b0e1c" stroke-width="2.5"/>
  <path d="M7.6 11.5 H15.4 " stroke="#0b0e1c" stroke-width="3"/>
</svg>
<div class="a" style="left:2794.50px;top:1386.30px;width:63.00px;height:63.00px;border:2px solid #c9ced7;box-sizing:border-box;background:#fff;border-radius:16px"></div>
<svg class="a" style="left:2810px;top:1402px" width="32" height="32" viewBox="0 0 32 32">
  <g transform="translate(16 16) scale(0.89) translate(-16 -16)">
  <path d="M13.6 2.5 H18.4 L19 6.6 L21.8 8.2 L25.6 6.6 L28 10.8 L24.8 13.4 V18.6 L28 21.2 L25.6 25.4 L21.8 23.8 L19 25.4 L18.4 29.5 H13.6 L13 25.4 L10.2 23.8 L6.4 25.4 L4 21.2 L7.2 18.6 V13.4 L4 10.8 L6.4 6.6 L10.2 8.2 L13 6.6Z" fill="none" stroke="#0b0e1c" stroke-width="2.9" stroke-linejoin="miter"/>
  <circle cx="16" cy="16" r="4.6" fill="none" stroke="#0b0e1c" stroke-width="2.9"/>
  </g>
</svg>
<div class="a" style="left:2794.50px;top:1466.50px;width:63.00px;height:63.00px;border:2px solid #c9ced7;box-sizing:border-box;background:#fff;border-radius:16px"></div>
<svg class="a" style="left:2810px;top:1482px" width="32" height="32" viewBox="0 0 32 32">
  <circle cx="16" cy="16" r="12.2" fill="none" stroke="#0b0e1c" stroke-width="2.8"/>
  <path d="M16 8 V17" stroke="#0b0e1c" stroke-width="2.6"/>
  <path d="M11.5 13.5 L16 18.5 L20.5 13.5" stroke="#0b0e1c" stroke-width="2.6" fill="none"/>
  <path d="M10 21.2 H22" stroke="#0b0e1c" stroke-width="2.6"/>
</svg>
<svg class="a" style="left:2842px;top:1514px" width="40" height="40" viewBox="2842 1514 40 40">
  <path d="M2882 1542 A24 24 0 0 1 2866 1554 L2882 1554Z" fill="#556348"/>
</svg>
<svg class="a" style="left:0;top:1514px" width="40" height="40" viewBox="0 1514 40 40">
  <path d="M0 1542 A24 24 0 0 0 17 1554 L0 1554Z" fill="#b9b69f"/>
  <path d="M0 1542 A24 24 0 0 0 2.2 1545.6 L2.2 1554 L0 1554Z" fill="#8d8654"/>
</svg>
<div class="a" style="left:2878.00px;top:229.00px;width:4.00px;height:1314.00px;background:#dfe0e4"></div>
<div class="a" style="left:0.00px;top:1440.00px;width:2882.00px;height:114.00px;background:linear-gradient(to bottom, rgba(190,190,196,0) 0%, rgba(190,190,196,0.06) 40%, rgba(190,190,196,0.2) 70%, rgba(190,190,196,0.45) 100%);-webkit-mask-image:linear-gradient(to right, rgba(0,0,0,0.15) 0%, #000 14%, #000 86%, rgba(0,0,0,0.15) 100%)"></div>
</body></html>
